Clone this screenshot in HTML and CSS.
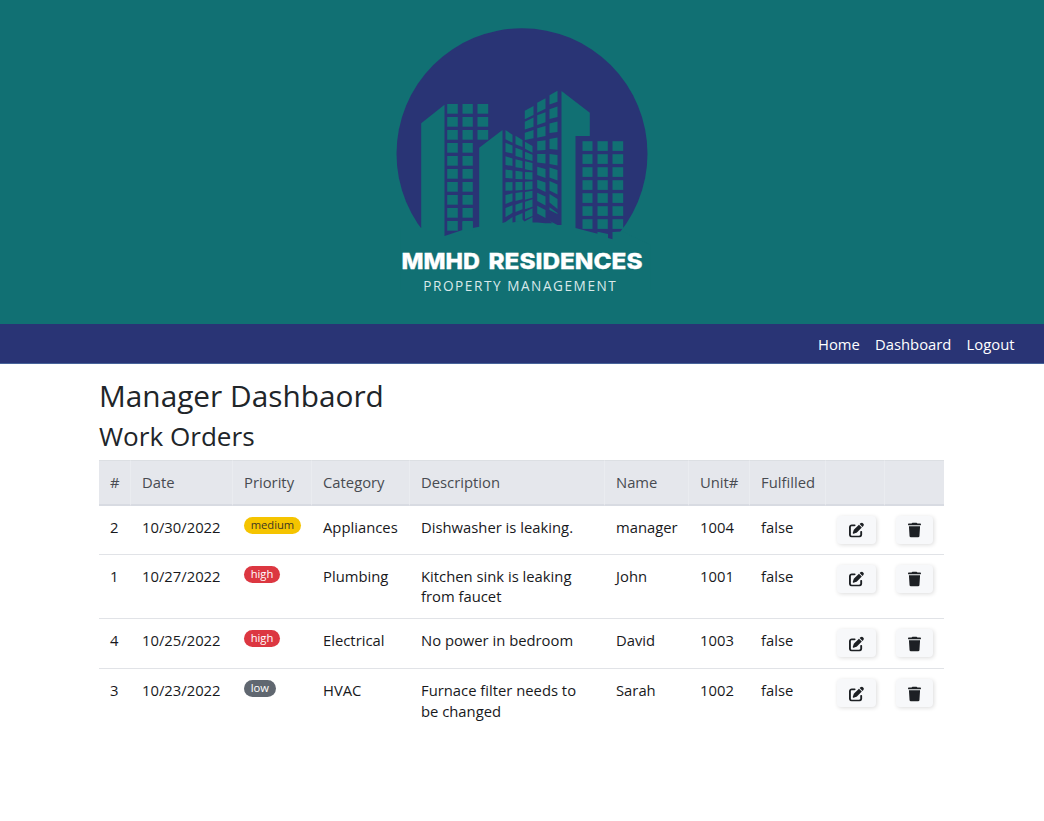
FILE: index.html
```html
<!DOCTYPE html>
<html lang="en">
<head>
<meta charset="utf-8">
<title>MMHD Residences</title>
<link rel="stylesheet" href="styles.css">
</head>
<body>
<header class="banner">
  <svg class="logo" viewBox="389.5 20 265 285" role="img" aria-label="MMHD Residences Property Management">
    <circle class="ink" cx="521.5" cy="153.8" r="125.5"/>
    <path class="cut" d="M420.7 123.3 444 104.7V236L462 230V221.700H472.300V228L478.700 226.700V147.700L502 130V223L505 222 512 217V222.500L515 222 522 219.500 524 221.500 532 217V222.500H536.700L545 223.300H552L549 221 557 225H561V91L589.300 112.700V136H575V228L597 233.700V231.700L607.500 234V238L612 239.300V232L622 231.500 650 245V290H400V228H420.700Z"/>
    <g class="cut" id="windows"></g>
    <text class="brand"><tspan x="401" y="269.300" textLength="78.500" lengthAdjust="spacingAndGlyphs">MMHD</tspan><tspan> </tspan><tspan x="488" y="269.300" textLength="154" lengthAdjust="spacingAndGlyphs">RESIDENCES</tspan></text>
    <text class="tagline" x="422.800" y="291" textLength="192.500">PROPERTY MANAGEMENT</text>
  </svg>
</header>
<nav class="nav">
  <a class="nav-link">Home</a>
  <a class="nav-link">Dashboard</a>
  <a class="nav-link">Logout</a>
</nav>
<main class="page">
  <h1 class="title">Manager Dashbaord</h1>
  <h2 class="subtitle">Work Orders</h2>
  <table class="orders">
    <colgroup><col class="c-id"><col class="c-date"><col class="c-priority"><col class="c-category"><col class="c-desc"><col class="c-name"><col class="c-unit"><col class="c-done"><col class="c-edit"><col class="c-del"></colgroup>
    <thead>
      <tr><th>#</th><th>Date</th><th>Priority</th><th>Category</th><th>Description</th><th>Name</th><th>Unit#</th><th>Fulfilled</th><th></th><th></th></tr>
    </thead>
    <tbody>
      <tr><td>2</td><td>10/30/2022</td><td><span class="badge medium">medium</span></td><td>Appliances</td><td>Dishwasher is leaking.</td><td>manager</td><td>1004</td><td>false</td>
        <td><button class="btn" aria-label="Edit"><svg class="icon" viewBox="0 0 512 512"><use href="#edit"/></svg></button></td>
        <td><button class="btn del" aria-label="Delete"><svg class="icon trash" viewBox="0 0 448 512"><use href="#trash"/></svg></button></td></tr>
      <tr class="tall"><td>1</td><td>10/27/2022</td><td><span class="badge high">high</span></td><td>Plumbing</td><td>Kitchen sink is leaking from faucet</td><td>John</td><td>1001</td><td>false</td>
        <td><button class="btn" aria-label="Edit"><svg class="icon" viewBox="0 0 512 512"><use href="#edit"/></svg></button></td>
        <td><button class="btn del" aria-label="Delete"><svg class="icon trash" viewBox="0 0 448 512"><use href="#trash"/></svg></button></td></tr>
      <tr><td>4</td><td>10/25/2022</td><td><span class="badge high">high</span></td><td>Electrical</td><td>No power in bedroom</td><td>David</td><td>1003</td><td>false</td>
        <td><button class="btn" aria-label="Edit"><svg class="icon" viewBox="0 0 512 512"><use href="#edit"/></svg></button></td>
        <td><button class="btn del" aria-label="Delete"><svg class="icon trash" viewBox="0 0 448 512"><use href="#trash"/></svg></button></td></tr>
      <tr class="tall"><td>3</td><td>10/23/2022</td><td><span class="badge low">low</span></td><td>HVAC</td><td>Furnace filter needs to be changed</td><td>Sarah</td><td>1002</td><td>false</td>
        <td><button class="btn" aria-label="Edit"><svg class="icon" viewBox="0 0 512 512"><use href="#edit"/></svg></button></td>
        <td><button class="btn del" aria-label="Delete"><svg class="icon trash" viewBox="0 0 448 512"><use href="#trash"/></svg></button></td></tr>
    </tbody>
  </table>
</main>
<svg class="defs" aria-hidden="true">
  <defs>
    <path id="edit" d="M471.6 21.7c-21.900-21.900-57.300-21.900-79.200 0L362.300 51.700l97.900 97.900 30.100-30.100c21.900-21.900 21.900-57.300 0-79.200L471.600 21.700zm-299.200 220c-6.100 6.100-10.800 13.600-13.500 21.900l-29.600 88.800c-2.900 8.600-.600 18.100 5.800 24.600s15.900 8.700 24.600 5.800l88.800-29.600c8.200-2.700 15.700-7.400 21.900-13.500L437.700 172.300 339.700 74.300 172.400 241.700zM96 64C43 64 0 107 0 160V416c0 53 43 96 96 96H352c53 0 96-43 96-96V320c0-17.700-14.300-32-32-32s-32 14.300-32 32v96c0 17.700-14.300 32-32 32H96c-17.700 0-32-14.300-32-32V160c0-17.700 14.300-32 32-32h96c17.700 0 32-14.300 32-32s-14.300-32-32-32H96z"/>
    <path id="trash" d="M135.200 17.700L128 32H32C14.300 32 0 46.300 0 64S14.300 96 32 96H416c17.700 0 32-14.300 32-32s-14.300-32-32-32H320l-7.200-14.300C307.400 6.800 296.300 0 284.200 0H163.800c-12.100 0-23.200 6.800-28.600 17.700zM416 128H32L53.200 467c1.600 25.300 22.600 45 47.900 45H346.900c25.300 0 46.300-19.700 47.900-45L416 128z"/>
  </defs>
</svg>
<script src="logo.js"></script>
</body>
</html>
```
FILE: logo.js
```js
// Each column: [left x, right x, rows], each row: [left top, left bottom, right top, right bottom].
const flat = (start, count) =>
  Array.from({ length: count }, (_, i) => {
    const y = start + 13 * i;
    return [y, y + 9.7, y, y + 9.7];
  });
const columns = [
  [446.7, 457.3, flat(104, 10)],
  [462, 472.3, flat(104, 10)],
  [477, 487.7, flat(104, 3)],
  [582, 592, flat(141.2, 7)],
  [597, 607.3, flat(141.2, 7)],
  [612, 622.7, flat(141.2, 7)],
  [505, 512, [[130, 139.3, 134.7, 142.7], [142.7, 152, 145.5, 153.5], [156.3, 165, 158.5, 166], [169.5, 178, 170.5, 178.5], [182.3, 190.7, 182, 190.5], [195, 204, 193.3, 201.3], [208, 217.3, 205.3, 212.7]]],
  [515, 522, [[135.7, 144.3, 140, 147], [147.7, 156, 150.3, 158], [159.3, 167.3, 161, 168.3], [170.7, 179, 171.7, 179.3], [182, 190.5, 182, 190], [193, 201, 192, 199.3], [204.7, 212, 202.3, 209.3], [216, 222.3, 213, 220.7]]],
  [524.5, 532, [[141.7, 148.7, 146, 152.7], [151.7, 159, 154.7, 161], [161.3, 169.3, 163, 170.7], [172, 179.3, 172.3, 179.7], [181.7, 190, 181.3, 189.3], [192, 199.7, 190.7, 197.7], [201.7, 209.3, 199.3, 206.7], [211.7, 219.3, 208.3, 216]]],
  [524.3, 533, [[110.7, 119.3, 106, 115], [121.7, 129.5, 117.5, 126.7], [132.7, 140, 130, 138.3]]],
  [536.7, 545, [[102.7, 112.7, 98.3, 108.7], [115.3, 125, 112.3, 122.3], [128.3, 137.7, 126, 136], [141.3, 150.5, 140.3, 150], [154, 162.5, 154, 163.5], [166.7, 175, 169, 178], [179.7, 188, 182.5, 192], [192.7, 201, 196.5, 205.5], [205.7, 213.5, 210, 218]]],
  [549, 557, [[95.3, 104.5, 90.7, 101.7], [109.3, 119, 106.5, 117], [123.5, 133, 121.5, 132], [139, 149, 137.5, 149.7], [154, 164, 155, 165.5], [167.5, 177.5, 170, 180.5], [181, 190.5, 184.5, 194.5], [194, 202.5, 199, 209], [207.3, 210, 213, 214]]],
];
document.getElementById('windows').innerHTML = columns
  .map(([l, r, rows]) => rows.map(([a, b, c, d]) => `<path d="M${l} ${a}L${r} ${c}V${d}L${l} ${b}Z"/>`).join(''))
  .join('');
```
FILE: styles.css
```css
* { box-sizing: border-box; }
body {
  margin: 0;
  background: #fff;
  color: #212529;
  font-family: "Open Sans", sans-serif;
  font-size: 14.8px;
  line-height: 20.6px;
}
.banner {
  height: 324px;
  padding-top: 20px;
  background: #117073;
}
.logo { display: block; width: 265px; height: 285px; margin: 0 auto; }
.ink { fill: #293475; }
.cut { fill: #117073; }
.brand { fill: #fff; font: 800 22.2px Inter, sans-serif; stroke: #fff; stroke-width: .3px; }
.tagline { fill: #d9e9ea; font: 400 13.6px "Open Sans", sans-serif; }
.nav {
  display: flex;
  justify-content: flex-end;
  align-items: center;
  gap: 15.2px;
  height: 39.5px;
  padding: 2px 29.5px 0 0;
  background: #293475;
  border-bottom: 1px solid #47639a;
}
.nav-link { color: #fff; font-size: 14.8px; font-weight: 500; }
.page { width: 845px; margin-left: 99px; }
.title, .subtitle { margin: 0; font-weight: 400; }
.title { padding-top: 14px; font-size: 29.8px; line-height: 36px; }
.subtitle { padding-top: 7px; font-size: 26.1px; line-height: 31px; }
.orders {
  width: 845px;
  margin-top: 8px;
  table-layout: fixed;
  border-collapse: separate;
  border-spacing: 0;
  color: #18191c;
}
.c-id { width: 32px; }
.c-date { width: 102px; }
.c-priority { width: 79px; }
.c-category { width: 98px; }
.c-desc { width: 195px; }
.c-name { width: 84px; }
.c-unit { width: 61px; }
.c-done { width: 76px; }
.c-edit { width: 59px; }
.c-del { width: 59px; }
.orders th {
  height: 46px;
  padding: 0 0 0 11px;
  background: #e5e7ec;
  border-top: 1px solid #dcdfe3;
  border-bottom: 2px solid #d8dbe2;
  border-right: 1px solid #eaecf0;
  color: #484b51;
  font-weight: 400;
  text-align: left;
}
.orders th:last-child { border-right: 0; }
.orders td {
  height: 49px;
  padding: 11px 0 10px 11px;
  border-bottom: 1px solid #e1e3e7;
  vertical-align: top;
}
.orders .tall td { height: 64px; }
.orders tr:last-child td { border-bottom: 0; }
.orders tr:nth-child(n+3) td { padding-top: 11.600px; }
.orders tr:nth-child(3) td { height: 50px; }
.orders td:nth-child(5) { padding-right: 18px; }
.badge {
  display: block;
  width: fit-content;
  height: 17px;
  padding: 0 6.700px;
  border-radius: 9px;
  font-size: 11.200px;
  line-height: 16.500px;
  color: #fff;
}
.medium { background: #f5c400; color: #3d3823; }
.high { background: #dc3741; }
.low { background: #606770; }
.btn {
  display: flex;
  align-items: center;
  justify-content: center;
  width: 39px;
  height: 28px;
  margin: -1px 0 0 -.500px;
  padding: 0;
  border: 0;
  border-radius: 4px;
  background: #f7f8fa;
  box-shadow: 1px 1px 4px rgba(0, 0, 0, .14);
}
.del { width: 37px; }
.icon { width: 15px; height: 15px; fill: #1d2024; transform: translateY(.500px); }
.trash { width: 13px; }
.defs { position: absolute; width: 0; height: 0; }
```
